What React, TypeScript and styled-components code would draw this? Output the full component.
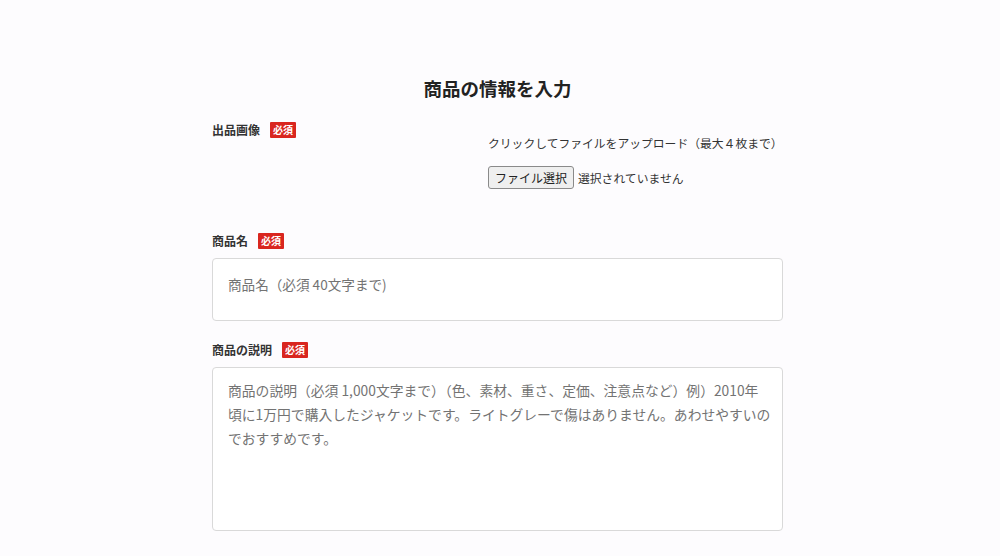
import React from "react";
import styled, { createGlobalStyle } from "styled-components";

const GlobalStyle = createGlobalStyle`
  html, body {
    margin: 0;
    padding: 0;
    background: #fdfcfe;
  }
  body {
    font-family: "Noto Sans CJK JP", "Noto Sans", sans-serif;
    color: #333;
  }
`;

const Page = styled.div`
  display: flex;
  justify-content: center;
  padding: 75px 5px 0 0;
  min-height: 556px;
  box-sizing: border-box;
`;

const Form = styled.form`
  width: 571px;
  display: flex;
  flex-direction: column;
`;

const Title = styled.h1`
  margin: 0 0 20px;
  font-size: 18.5px;
  line-height: 26px;
  font-weight: 700;
  text-align: center;
  color: #222;
`;

const Field = styled.div<{ $gapAfter?: number }>`
  display: flex;
  flex-direction: column;
  gap: 8px;
  margin-bottom: ${(p) => p.$gapAfter ?? 20}px;
`;

const ImageRow = styled.div`
  display: flex;
  align-items: flex-start;
  margin-bottom: 43px;
`;

const LabelRow = styled.div`
  display: flex;
  align-items: center;
  height: 18px;
`;

const Label = styled.label`
  font-size: 12px;
  line-height: 18px;
  font-weight: 700;
  color: #333;
`;

const Required = styled.span`
  margin-left: 10px;
  display: inline-flex;
  align-items: center;
  justify-content: center;
  width: 26px;
  height: 16px;
  background: #d9261f;
  color: #fff;
  font-size: 10px;
  font-weight: 700;
  line-height: 1;
  border-radius: 1px;
`;

const Upload = styled.div`
  margin-left: auto;
  width: 295px;
  padding-top: 13px;
  display: flex;
  flex-direction: column;
  gap: 14px;
`;

const UploadHint = styled.p`
  margin: 0;
  font-size: 11.8px;
  line-height: 18px;
  color: #333;
`;

const FilePicker = styled.div`
  display: flex;
  align-items: center;
  gap: 4px;
`;

const FileButton = styled.button`
  height: 23px;
  padding: 0 6px;
  font-family: inherit;
  font-size: 12px;
  color: #222;
  background: #efefef;
  border: 1px solid #8a8a8a;
  border-radius: 3px;
`;

const FileStatus = styled.span`
  font-size: 11.8px;
  color: #333;
`;

const TextInput = styled.input`
  box-sizing: border-box;
  width: 100%;
  height: 63px;
  padding: 17px 15px 28px;
  font-family: inherit;
  font-size: 13.6px;
  line-height: 16px;
  background: #fff;
  border: 1px solid #d9d9d9;
  border-radius: 4px;
  outline: none;

  &::placeholder {
    color: #737373;
  }
`;

const TextArea = styled.textarea`
  box-sizing: border-box;
  width: 100%;
  height: 164px;
  padding: 10px 4px 10px 15px;
  font-family: inherit;
  font-size: 13.8px;
  line-height: 24px;
  background: #fff;
  border: 1px solid #d9d9d9;
  border-radius: 4px;
  outline: none;
  resize: none;

  &::placeholder {
    color: #737373;
  }
`;

const descriptionHint = [
  "商品の説明（必須 1,000文字まで）（色、素材、重さ、定価、注意点など）例）2010年",
  "頃に1万円で購入したジャケットです。ライトグレーで傷はありません。あわせやすいの",
  "でおすすめです。",
].join("\n");

const App: React.FC = () => {
  return (
    <>
      <GlobalStyle />
      <Page>
        <Form onSubmit={(e) => e.preventDefault()}>
          <Title>商品の情報を入力</Title>

          <ImageRow>
            <LabelRow>
              <Label>出品画像</Label>
              <Required>必須</Required>
            </LabelRow>
            <Upload>
              <UploadHint>クリックしてファイルをアップロード（最大４枚まで）</UploadHint>
              <FilePicker>
                <FileButton type="button">ファイル選択</FileButton>
                <FileStatus>選択されていません</FileStatus>
              </FilePicker>
            </Upload>
          </ImageRow>

          <Field>
            <LabelRow>
              <Label htmlFor="item-name">商品名</Label>
              <Required>必須</Required>
            </LabelRow>
            <TextInput id="item-name" placeholder="商品名（必須 40文字まで)" />
          </Field>

          <Field $gapAfter={0}>
            <LabelRow>
              <Label htmlFor="item-info">商品の説明</Label>
              <Required>必須</Required>
            </LabelRow>
            <TextArea id="item-info" placeholder={descriptionHint} />
          </Field>
        </Form>
      </Page>
    </>
  );
};

export default App;
